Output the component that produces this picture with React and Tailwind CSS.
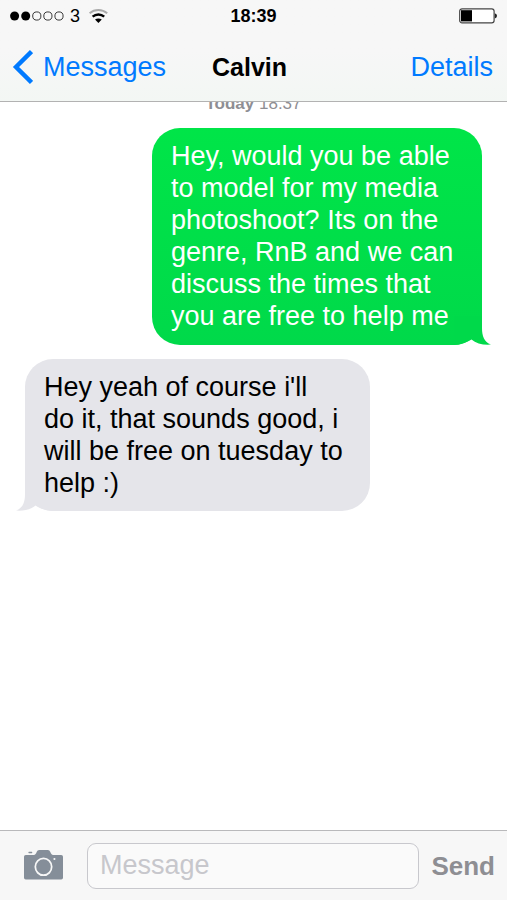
import React from "react";

function StatusBar() {
  return (
    <div className="grid h-8 grid-cols-[1fr_auto_1fr] items-center px-[10px] text-[18px] leading-5 text-black">
      <div className="flex items-center">
        <svg width="54" height="10" viewBox="0 0 54 10" aria-hidden="true">
          <circle cx="4.6" cy="5" r="4.5" />
          <circle cx="15.7" cy="5" r="4.5" />
          <circle cx="26.8" cy="5" r="4.1" fill="none" stroke="#222" strokeWidth="0.9" />
          <circle cx="37.9" cy="5" r="4.1" fill="none" stroke="#222" strokeWidth="0.9" />
          <circle cx="49" cy="5" r="4.1" fill="none" stroke="#222" strokeWidth="0.9" />
        </svg>
        <span className="ml-[6px]">3</span>
        <svg className="ml-[9px]" width="20" height="16" viewBox="0 0 20 16" fill="none" aria-hidden="true">
          <path d="M0.6 5.3C5.6 .9 13.2.9 18.2 5.3" stroke="#aaa" strokeWidth="2" />
          <path d="M3.6 8.7C7 5.7 11.8 5.7 15.2 8.7" stroke="#000" strokeWidth="2.4" />
          <path d="M6 11.6C8 10 10.8 10 12.8 11.6L9.4 15Z" fill="#000" />
        </svg>
      </div>
      <span className="font-bold">18:39</span>
      <svg className="justify-self-end" width="38" height="16" viewBox="0 0 38 16" aria-hidden="true">
        <rect x="0.7" y="0.8" width="34.4" height="14" rx="2.4" fill="#fff" stroke="#444" strokeWidth="1.2" />
        <rect x="2" y="2.2" width="11" height="11.2" fill="#000" />
        <path d="M35.8 5.2Q38 5.8 38 7.8Q38 9.8 35.8 10.4Z" fill="#222" />
      </svg>
    </div>
  );
}

function NavBar() {
  return (
    <nav className="grid h-[69px] grid-cols-[1fr_auto_1fr] items-center pr-[14px] pl-3 text-[27px] leading-8">
      <a href="#messages" className="flex items-center gap-[10px] text-[#007aff]">
        <svg width="21" height="34" viewBox="0 0 21 34" fill="none" aria-hidden="true">
          <path d="M19.5 1.6L4 17L19.5 32.4" stroke="#007aff" strokeWidth="4.4" />
        </svg>
        Messages
      </a>
      <h1 className="pr-[6px] text-[25px] font-bold text-black">Calvin</h1>
      <a href="#details" className="justify-self-end text-[#007aff]">
        Details
      </a>
    </nav>
  );
}

function SentBubble({ children }) {
  return (
    <div className="relative isolate mr-[25px] w-[330px] self-end rounded-[28px] bg-linear-to-b from-[#00e548] to-[#00d94a] px-[19px] pt-3 pb-[13px] text-white">
      {children}
      <svg className="absolute right-[-9px] bottom-0 -z-10" width="37" height="29" viewBox="0 0 37 29" aria-hidden="true">
        <path d="M0 0H28V12C28 20 30 26 37 28.6C29 29.2 22 27.4 17.5 23.5C12 27 6 29 0 29Z" fill="#00d94a" />
      </svg>
    </div>
  );
}

function ReceivedBubble({ children }) {
  return (
    <div className="relative isolate ml-[25px] w-[345px] rounded-[28px] bg-[#e5e5ea] px-[19px] py-3 text-black">
      {children}
      <svg className="absolute bottom-0 left-[-9px] -z-10" width="37" height="29" viewBox="0 0 37 29" aria-hidden="true">
        <path d="M37 0H9V12C9 20 7 26 0 28.6C8 29.2 15 27.4 19.5 23.5C25 27 31 29 37 29Z" fill="#e5e5ea" />
      </svg>
    </div>
  );
}

function Composer() {
  return (
    <form
      className="flex h-[70px] items-center gap-3 border-t border-[#b9b9bb] bg-[#f7f7f7] pr-3 pl-6"
      onSubmit={(e) => e.preventDefault()}
    >
      <button type="button" aria-label="Camera" className="mr-3 w-[39px] shrink-0 pb-[2px]">
        <svg width="39" height="30" viewBox="0 0 40 30" preserveAspectRatio="none" aria-hidden="true">
          <path
            d="M1.8 5H10C11.8 5 12.2 3.6 13 2C13.6.7 14.2 0 15.6 0H24.4C25.8 0 26.4.7 27 2C27.8 3.6 28.2 5 30 5H38.2Q40 5 40 6.8V27.7Q40 29.5 38.2 29.5H1.8Q0 29.5 0 27.7V6.8Q0 5 1.8 5Z"
            fill="#858e99"
          />
          <rect x="4.5" y="1.8" width="4" height="1.4" rx="0.6" fill="#858e99" />
          <circle cx="20" cy="16.8" r="8.4" fill="none" stroke="#f7f7f7" strokeWidth="1.8" />
          <circle cx="31.2" cy="9" r="1.1" fill="#f7f7f7" />
        </svg>
      </button>
      <input
        type="text"
        aria-label="Message"
        placeholder="Message"
        className="h-[46px] min-w-0 flex-1 rounded-[9px] border border-[#c8c8cd] bg-[#fafafa] px-3 text-[27px] leading-8 text-black outline-none placeholder:text-[#c7c7cc]"
      />
      <button type="submit" className="shrink-0 text-[26px] leading-8 font-bold text-[#8e8e93]">
        Send
      </button>
    </form>
  );
}

export default function App() {
  return (
    <div className="flex h-screen flex-col bg-white font-['Liberation_Sans',Arial,sans-serif]">
      <header className="border-b border-[#b2b2b2] bg-linear-to-b from-[#f7f7f7] from-50% to-[#f3f7f4]">
        <StatusBar />
        <NavBar />
      </header>
      <main className="flex min-h-0 flex-1 flex-col overflow-hidden text-[27px] leading-8">
        <p className="-mt-2 mb-[14px] text-center text-[17px] leading-5 text-[#8e8e93]">
          <b>Today</b> 18:37
        </p>
        <SentBubble>
          Hey, would you be able
          <br />
          to model for my media
          <br />
          photoshoot? Its on the
          <br />
          genre, RnB and we can
          <br />
          discuss the times that
          <br />
          you are free to help me
        </SentBubble>
        <div className="h-[14px] shrink-0" />
        <ReceivedBubble>
          Hey yeah of course i'll
          <br />
          do it, that sounds good, i
          <br />
          will be free on tuesday to
          <br />
          help :)
        </ReceivedBubble>
      </main>
      <Composer />
    </div>
  );
}
